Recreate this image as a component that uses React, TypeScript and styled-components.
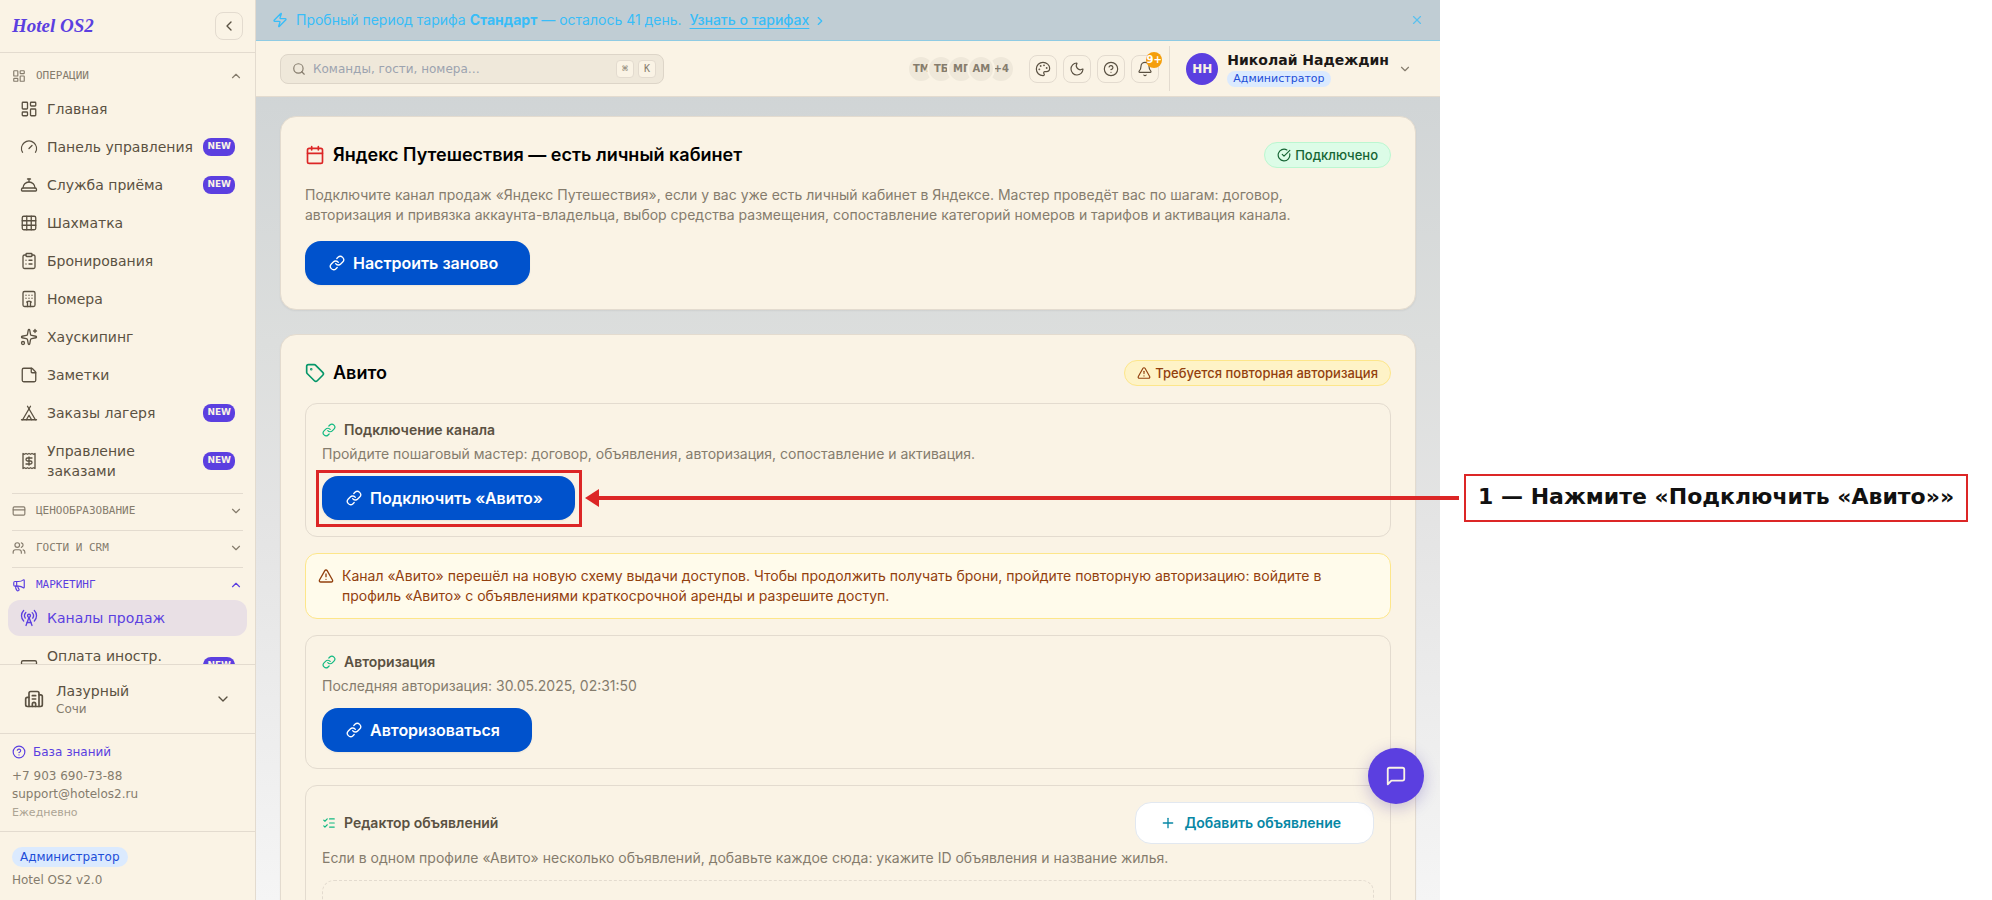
import React from 'react';
import styled, { createGlobalStyle } from 'styled-components';
import {
  Bell, Building2, Calendar, ChevronDown, ChevronLeft, ChevronRight, ChevronUp, CircleCheckBig,
  CircleHelp, ClipboardList, ConciergeBell, CreditCard, Gauge, Grid3x3, Hotel, LayoutDashboard,
  Link as LinkIcon, ListChecks, Megaphone, Moon, Palette, Plus, RadioTower, Receipt, Search,
  Sparkles, StickyNote, Tag, Tent, TriangleAlert, Users, X, Zap, type LucideIcon,
} from 'lucide-react';

const c = {
  cream: '#faf3e5',
  sand: '#efe8da',
  line: '#e3dbcf',
  ink: '#1c1917',
  text: '#5a5142',
  muted: '#857c6d',
  faint: '#aca494',
  violet: '#5b3fe0',
  blue: '#0052cc',
  red: '#dc2626',
  amber: '#92400e',
};
const ui = `"DejaVu Sans", "Noto Sans", sans-serif`;
const inter = `Inter, "Noto Sans", sans-serif`;

const Global = createGlobalStyle`
  *, *::before, *::after { box-sizing: border-box; }
  body { margin: 0; background: #fff; font-family: ${inter}; font-size: 14px; line-height: 20px; }
  button, input { font: inherit; color: inherit; }
  button { cursor: pointer; }
  h1, h2, h3, p { margin: 0; }
  svg { flex: none; }
`;

const Page = styled.div`
  display: grid;
  grid-template-columns: minmax(0, 1fr) 552px;
  height: 100vh;
  overflow: hidden;
`;
const AppFrame = styled.div`
  position: relative;
  display: flex;
  height: 100vh;
  background: linear-gradient(#ccd1d3 0%, #dcdedd 38%, #e4e4e4 58%, #f5f5f5 100%);
`;

/* Sidebar */
const Sidebar = styled.aside`
  display: flex;
  flex-direction: column;
  flex: none;
  width: 256px;
  background: ${c.cream};
  border-right: 1px solid ${c.line};
  font-family: ${ui};
  color: ${c.text};
`;
const Brand = styled.div`
  display: flex;
  align-items: center;
  justify-content: space-between;
  height: 53px;
  padding: 0 12px;
  border-bottom: 1px solid ${c.line};
`;
const Logo = styled.span`
  font: italic bold 19px/28px "Liberation Serif", serif;
  color: ${c.violet};
`;
const SquareButton = styled.button`
  position: relative;
  display: flex;
  align-items: center;
  justify-content: center;
  width: 28px;
  height: 28px;
  padding: 0;
  border: 1px solid ${c.line};
  border-radius: 8px;
  background: transparent;
  color: ${c.text};
`;
const Nav = styled.nav`
  flex: 1;
  min-height: 0;
  padding-top: 8px;
  overflow-y: auto;
  scrollbar-width: none;
`;
const Group = styled.section`
  padding-bottom: 4px;
`;
const GroupRule = styled.div`
  height: 1px;
  margin: 0 12px 2px;
  background: ${c.line};
`;
const GroupHead = styled.button<{ $active?: boolean }>`
  display: flex;
  align-items: center;
  gap: 10px;
  width: 100%;
  height: 30px;
  padding: 0 12px;
  border: 0;
  background: transparent;
  font: 11px/16px "DejaVu Sans Mono", monospace;
  color: ${(p) => (p.$active ? c.violet : c.muted)};
  text-transform: uppercase;
  text-align: left;
  span { flex: 1; }
`;
const ItemList = styled.ul`
  display: flex;
  flex-direction: column;
  gap: 2px;
  margin: 0;
  padding: 0 8px;
  list-style: none;
`;
const Item = styled.a<{ $active?: boolean }>`
  display: flex;
  align-items: center;
  gap: 9px;
  padding: 8px 12px;
  border-radius: 12px;
  font-size: 14px;
  line-height: 20px;
  text-decoration: none;
  color: ${(p) => (p.$active ? c.violet : c.text)};
  background: ${(p) => (p.$active ? '#e9e0e5' : 'transparent')};
  span { flex: 1; }
`;
const NewBadge = styled.em`
  padding: 1px 4px 3px;
  border-radius: 8px;
  background: ${c.violet};
  color: ${c.cream};
  font: bold 9px/14px ${ui};
`;
const HotelBox = styled.div`
  padding: 8px 12px;
  border-top: 1px solid ${c.line};
`;
const HotelButton = styled.button`
  display: flex;
  align-items: center;
  gap: 12px;
  width: 100%;
  padding: 8px 12px;
  border: 0;
  background: transparent;
  text-align: left;
  span { flex: 1; font-size: 14px; line-height: 20px; }
  small { display: block; font-size: 12px; line-height: 16px; color: ${c.muted}; }
`;
const Support = styled.div`
  display: flex;
  flex-direction: column;
  padding: 9px 12px 10px;
  border-top: 1px solid ${c.line};
  font-size: 12px;
  line-height: 18px;
  color: ${c.muted};
  a { color: inherit; text-decoration: none; }
  small { margin-top: 2px; font-size: 11px; line-height: 16px; color: ${c.faint}; }
`;
const HelpLink = styled.a`
  display: flex;
  align-items: center;
  gap: 7px;
  margin-bottom: 6px;
  && { color: ${c.violet}; }
`;
const Version = styled.div`
  display: flex;
  flex-direction: column;
  align-items: flex-start;
  gap: 5px;
  padding: 15px 12px 12px;
  border-top: 1px solid ${c.line};
  font-size: 12px;
  line-height: 16px;
  color: ${c.muted};
`;
const RoleBadge = styled.span<{ $small?: boolean }>`
  padding: ${(p) => (p.$small ? '0 6px' : '2px 8px')};
  border-radius: 10px;
  background: #dbeafe;
  color: #1d4ed8;
  font-size: ${(p) => (p.$small ? 11 : 12)}px;
  line-height: 16px;
`;

/* Top bars */
const Column = styled.div`
  display: flex;
  flex-direction: column;
  flex: 1;
  min-width: 0;
`;
const Trial = styled.div`
  display: flex;
  align-items: center;
  flex: none;
  gap: 8px;
  height: 41px;
  padding: 0 16px;
  border-bottom: 1px solid #8fcbe3;
  background: #c0cdd4;
  color: #38bdf8;
  p { flex: 1; }
  b { font-weight: 700; }
`;
const TrialLink = styled.a`
  margin-left: 4px;
  color: inherit;
  font-weight: 500;
  text-underline-offset: 3px;
  & + svg { margin-left: 4px; vertical-align: -3px; }
`;
const CloseButton = styled.button`
  display: flex;
  padding: 0;
  border: 0;
  background: none;
  opacity: 0.75;
`;
const Header = styled.header`
  display: flex;
  align-items: center;
  flex: none;
  height: 56px;
  padding: 0 24px;
  border-bottom: 1px solid ${c.line};
  background: ${c.cream};
  font-family: ${ui};
  color: ${c.text};
`;
const SearchBox = styled.label`
  display: flex;
  align-items: center;
  gap: 4px;
  width: 384px;
  height: 30px;
  margin-right: auto;
  padding: 0 7px 0 11px;
  border: 1px solid #ddd5c8;
  border-radius: 8px;
  background: ${c.sand};
  color: ${c.muted};
  input {
    flex: 1;
    min-width: 0;
    padding: 0 3px;
    border: 0;
    outline: 0;
    background: none;
    font-size: 12px;
    line-height: 16px;
  }
  input::placeholder { color: #9ca3af; opacity: 1; }
`;
const Key = styled.kbd`
  width: 18px;
  height: 18px;
  border: 1px solid ${c.line};
  border-radius: 4px;
  background: ${c.cream};
  font: 10px/16px "DejaVu Sans Mono", monospace;
  text-align: center;
`;
const Faces = styled.div`
  display: flex;
  margin-right: 14px;
`;
const Face = styled.span`
  display: flex;
  align-items: center;
  justify-content: center;
  width: 28px;
  height: 28px;
  border: 2px solid ${c.cream};
  border-radius: 50%;
  background: ${c.sand};
  color: ${c.muted};
  font-size: 10px;
  font-weight: bold;
  & + & { margin-left: -8px; }
  &:nth-child(4) { z-index: 1; }
`;
const Tools = styled.div`
  display: flex;
  gap: 6px;
  margin-right: 10px;
`;
const Count = styled.span`
  position: absolute;
  top: -4px;
  right: -4px;
  width: 16px;
  height: 16px;
  border-radius: 50%;
  background: #f59e0b;
  color: #fff;
  font: bold 10px/16px ${ui};
  text-align: center;
`;
const UserButton = styled.button`
  display: flex;
  align-items: center;
  gap: 9px;
  height: 45px;
  padding: 0 4px 0 16px;
  border: 0;
  border-left: 1px solid ${c.line};
  background: none;
  color: ${c.muted};
`;
const Avatar = styled.span`
  width: 32px;
  height: 32px;
  border-radius: 50%;
  background: ${c.violet};
  color: ${c.cream};
  font-size: 12px;
  font-weight: bold;
  line-height: 32px;
  text-align: center;
`;
const UserText = styled.span`
  display: flex;
  flex-direction: column;
  align-items: flex-start;
  gap: 2px;
  b { font-size: 14px; line-height: 18px; color: ${c.ink}; }
`;

/* Content */
const Main = styled.main`
  display: flex;
  flex-direction: column;
  gap: 24px;
  padding: 19px 24px 24px;
`;
const Text = styled.p`
  max-width: 1040px;
  color: ${c.muted};
`;
const Card = styled.section`
  display: flex;
  flex-direction: column;
  align-items: stretch;
  gap: 16px;
  padding: 24px;
  border: 1px solid ${c.line};
  border-radius: 16px;
  background: ${c.cream};
  box-shadow: 0 1px 2px rgba(0, 0, 0, 0.06);
`;
const CardHead = styled.div`
  display: flex;
  align-items: center;
  justify-content: space-between;
`;
const CardTitle = styled.h2<{ $tone: string }>`
  display: flex;
  align-items: center;
  gap: 8px;
  font-size: 18px;
  font-weight: 600;
  line-height: 28px;
  color: #000;
  svg { color: ${(p) => p.$tone}; }
`;
const Status = styled.span<{ $ok?: boolean }>`
  display: flex;
  align-items: center;
  gap: 4px;
  padding: 4px 12px;
  border: 1px solid ${(p) => (p.$ok ? '#bbf7d0' : '#fde68a')};
  border-radius: 13px;
  background: ${(p) => (p.$ok ? '#dcfce7' : '#fef3c7')};
  color: ${(p) => (p.$ok ? '#166534' : c.amber)};
  font-size: 13px;
  font-weight: 500;
  line-height: 16px;
`;
const Primary = styled.button`
  display: flex;
  align-items: center;
  align-self: flex-start;
  gap: 8px;
  height: 44px;
  padding: 0 32px 0 24px;
  border: 0;
  border-radius: 16px;
  background: ${c.blue};
  color: #fff;
  font-size: 16px;
  font-weight: 600;
  line-height: 24px;
  box-shadow: 0 1px 2px rgba(0, 0, 0, 0.06);
`;
const Secondary = styled.button`
  display: flex;
  align-items: center;
  gap: 8px;
  height: 42px;
  padding: 0 32px 0 24px;
  border: 1px solid #e2e8f0;
  border-radius: 16px;
  background: #fff;
  color: #0787a5;
  font-weight: 600;
`;
const Panel = styled.section`
  display: flex;
  flex-direction: column;
  padding: 16px;
  border: 1px solid ${c.line};
  border-radius: 12px;
  ${Text} { margin: 4px 0 12px; }
`;
const PanelHead = styled.div`
  display: flex;
  align-items: center;
  justify-content: space-between;
`;
const PanelTitle = styled.h3`
  display: flex;
  align-items: center;
  gap: 8px;
  font-size: 14px;
  font-weight: 600;
  line-height: 20px;
  color: ${c.text};
  svg { color: #10b981; }
`;
const Alert = styled.div`
  display: flex;
  gap: 8px;
  padding: 12px;
  border: 1px solid #fde68a;
  border-radius: 12px;
  background: #fffbeb;
  color: ${c.amber};
  svg { margin-top: 2px; }
`;
const EmptyList = styled.div`
  height: 96px;
  border: 1px dashed ${c.line};
  border-radius: 12px;
`;
const ChatButton = styled.button`
  position: absolute;
  right: 16px;
  bottom: 96px;
  display: flex;
  align-items: center;
  justify-content: center;
  width: 56px;
  height: 56px;
  padding: 0;
  border: 0;
  border-radius: 50%;
  background: ${c.violet};
  color: ${c.cream};
  box-shadow: 0 4px 16px rgba(60, 40, 160, 0.28);
`;

/* Instruction markup over the page */
const Step = styled.div`
  position: relative;
  z-index: 2;
  display: flex;
  align-items: center;
`;
const Marked = styled.div`
  position: relative;
  &::after {
    content: '';
    position: absolute;
    inset: -6px -7px -7px -6px;
    border: 3px solid ${c.red};
    pointer-events: none;
  }
`;
const Arrow = styled.div`
  position: relative;
  display: flex;
  align-items: center;
  flex: 1;
  margin: 0 -85px 0 10px;
  &::before {
    content: '';
    border: solid transparent;
    border-width: 9px 14px 9px 0;
    border-right-color: ${c.red};
  }
  &::after {
    content: '';
    flex: 1;
    height: 4px;
    background: ${c.red};
  }
`;
const Callout = styled.div`
  position: absolute;
  left: calc(100% + 5px);
  padding: 8px 12px 10px;
  border: 2px solid ${c.red};
  background: #fff;
  color: #111;
  font: bold 22px/26px ${ui};
  white-space: nowrap;
`;

type Entry = { icon: LucideIcon; label: string; fresh?: boolean; active?: boolean };

const operations: Entry[] = [
  { icon: LayoutDashboard, label: 'Главная' },
  { icon: Gauge, label: 'Панель управления', fresh: true },
  { icon: ConciergeBell, label: 'Служба приёма', fresh: true },
  { icon: Grid3x3, label: 'Шахматка' },
  { icon: ClipboardList, label: 'Бронирования' },
  { icon: Hotel, label: 'Номера' },
  { icon: Sparkles, label: 'Хаускипинг' },
  { icon: StickyNote, label: 'Заметки' },
  { icon: Tent, label: 'Заказы лагеря', fresh: true },
  { icon: Receipt, label: 'Управление заказами', fresh: true },
];
const marketing: Entry[] = [
  { icon: RadioTower, label: 'Каналы продаж', active: true },
  { icon: CreditCard, label: 'Оплата иностр. картами', fresh: true },
];

type GroupProps = { icon: LucideIcon; title: string; items?: Entry[]; active?: boolean; first?: boolean };

function NavGroup({ icon: Icon, title, items, active, first }: GroupProps) {
  const Chevron = items ? ChevronUp : ChevronDown;
  return (
    <Group>
      {!first && <GroupRule />}
      <GroupHead $active={active} aria-expanded={!!items}>
        <Icon size={14} />
        <span>{title}</span>
        <Chevron size={14} />
      </GroupHead>
      {items && (
        <ItemList>
          {items.map(({ icon: ItemIcon, label, fresh, active: on }) => (
            <li key={label}>
              <Item href="#" $active={on}>
                <ItemIcon size={18} strokeWidth={1.75} />
                <span>{label}</span>
                {fresh && <NewBadge>NEW</NewBadge>}
              </Item>
            </li>
          ))}
        </ItemList>
      )}
    </Group>
  );
}

export default function App() {
  return (
    <>
      <Global />
      <Page>
        <AppFrame>
          <Sidebar>
            <Brand>
              <Logo>Hotel OS2</Logo>
              <SquareButton aria-label="Свернуть меню"><ChevronLeft size={16} /></SquareButton>
            </Brand>
            <Nav>
              <NavGroup first icon={LayoutDashboard} title="Операции" items={operations} />
              <NavGroup icon={CreditCard} title="Ценообразование" />
              <NavGroup icon={Users} title="Гости и CRM" />
              <NavGroup active icon={Megaphone} title="Маркетинг" items={marketing} />
            </Nav>
            <HotelBox>
              <HotelButton>
                <Building2 size={20} />
                <span>Лазурный<small>Сочи</small></span>
                <ChevronDown size={16} />
              </HotelButton>
            </HotelBox>
            <Support>
              <HelpLink href="#"><CircleHelp size={14} />База знаний</HelpLink>
              <a href="tel:+79036907388">+7 903 690-73-88</a>
              <a href="mailto:support@hotelos2.ru">support@hotelos2.ru</a>
              <small>Ежедневно</small>
            </Support>
            <Version>
              <RoleBadge>Администратор</RoleBadge>
              Hotel OS2 v2.0
            </Version>
          </Sidebar>

          <Column>
            <Trial>
              <Zap size={16} />
              <p>
                Пробный период тарифа <b>Стандарт</b> — осталось 41 день.{' '}
                <TrialLink href="#">Узнать о тарифах</TrialLink>
                <ChevronRight size={14} />
              </p>
              <CloseButton aria-label="Закрыть"><X size={14} /></CloseButton>
            </Trial>
            <Header>
              <SearchBox>
                <Search size={14} />
                <input aria-label="Поиск" placeholder="Команды, гости, номера…" />
                <Key>⌘</Key>
                <Key>K</Key>
              </SearchBox>
              <Faces>
                {['ТМ', 'ТБ', 'МГ', 'АМ', '+4'].map((f) => <Face key={f}>{f}</Face>)}
              </Faces>
              <Tools>
                <SquareButton aria-label="Тема"><Palette size={16} strokeWidth={1.75} /></SquareButton>
                <SquareButton aria-label="Тёмный режим"><Moon size={16} strokeWidth={1.75} /></SquareButton>
                <SquareButton aria-label="Справка"><CircleHelp size={16} strokeWidth={1.75} /></SquareButton>
                <SquareButton aria-label="Уведомления">
                  <Bell size={16} strokeWidth={1.75} />
                  <Count>9+</Count>
                </SquareButton>
              </Tools>
              <UserButton>
                <Avatar>НН</Avatar>
                <UserText>
                  <b>Николай Надеждин</b>
                  <RoleBadge $small>Администратор</RoleBadge>
                </UserText>
                <ChevronDown size={14} />
              </UserButton>
            </Header>

            <Main>
              <Card>
                <CardHead>
                  <CardTitle $tone="#dc2626"><Calendar size={20} />Яндекс Путешествия — есть личный кабинет</CardTitle>
                  <Status $ok><CircleCheckBig size={14} />Подключено</Status>
                </CardHead>
                <Text>
                  Подключите канал продаж «Яндекс Путешествия», если у вас уже есть личный кабинет в Яндексе.
                  Мастер проведёт вас по шагам: договор, авторизация и привязка аккаунта-владельца, выбор
                  средства размещения, сопоставление категорий номеров и тарифов и активация канала.
                </Text>
                <Primary><LinkIcon size={16} />Настроить заново</Primary>
              </Card>

              <Card>
                <CardHead>
                  <CardTitle $tone="#059669"><Tag size={20} />Авито</CardTitle>
                  <Status><TriangleAlert size={14} />Требуется повторная авторизация</Status>
                </CardHead>
                <Panel>
                  <PanelTitle><LinkIcon size={14} />Подключение канала</PanelTitle>
                  <Text>Пройдите пошаговый мастер: договор, объявления, авторизация, сопоставление и активация.</Text>
                  <Step>
                    <Marked>
                      <Primary><LinkIcon size={16} />Подключить «Авито»</Primary>
                    </Marked>
                    <Arrow>
                      <Callout>1 — Нажмите «Подключить «Авито»»</Callout>
                    </Arrow>
                  </Step>
                </Panel>
                <Alert role="alert">
                  <TriangleAlert size={16} />
                  <p>
                    Канал «Авито» перешёл на новую схему выдачи доступов. Чтобы продолжить получать брони,
                    пройдите повторную авторизацию: войдите в профиль «Авито» с объявлениями краткосрочной
                    аренды и разрешите доступ.
                  </p>
                </Alert>
                <Panel>
                  <PanelTitle><LinkIcon size={14} />Авторизация</PanelTitle>
                  <Text>Последняя авторизация: 30.05.2025, 02:31:50</Text>
                  <Primary><LinkIcon size={16} />Авторизоваться</Primary>
                </Panel>
                <Panel>
                  <PanelHead>
                    <PanelTitle><ListChecks size={14} />Редактор объявлений</PanelTitle>
                    <Secondary><Plus size={16} />Добавить объявление</Secondary>
                  </PanelHead>
                  <Text>
                    Если в одном профиле «Авито» несколько объявлений, добавьте каждое сюда: укажите ID
                    объявления и название жилья.
                  </Text>
                  <EmptyList />
                </Panel>
              </Card>
            </Main>
          </Column>

          <ChatButton aria-label="Чат">
            <svg width="22" height="22" viewBox="0 0 24 24" fill="none" stroke="currentColor" strokeWidth="2" strokeLinecap="round" strokeLinejoin="round">
              <path d="M21 15a2 2 0 0 1-2 2H7l-4 4V5a2 2 0 0 1 2-2h14a2 2 0 0 1 2 2z" />
            </svg>
          </ChatButton>
        </AppFrame>
      </Page>
    </>
  );
}
